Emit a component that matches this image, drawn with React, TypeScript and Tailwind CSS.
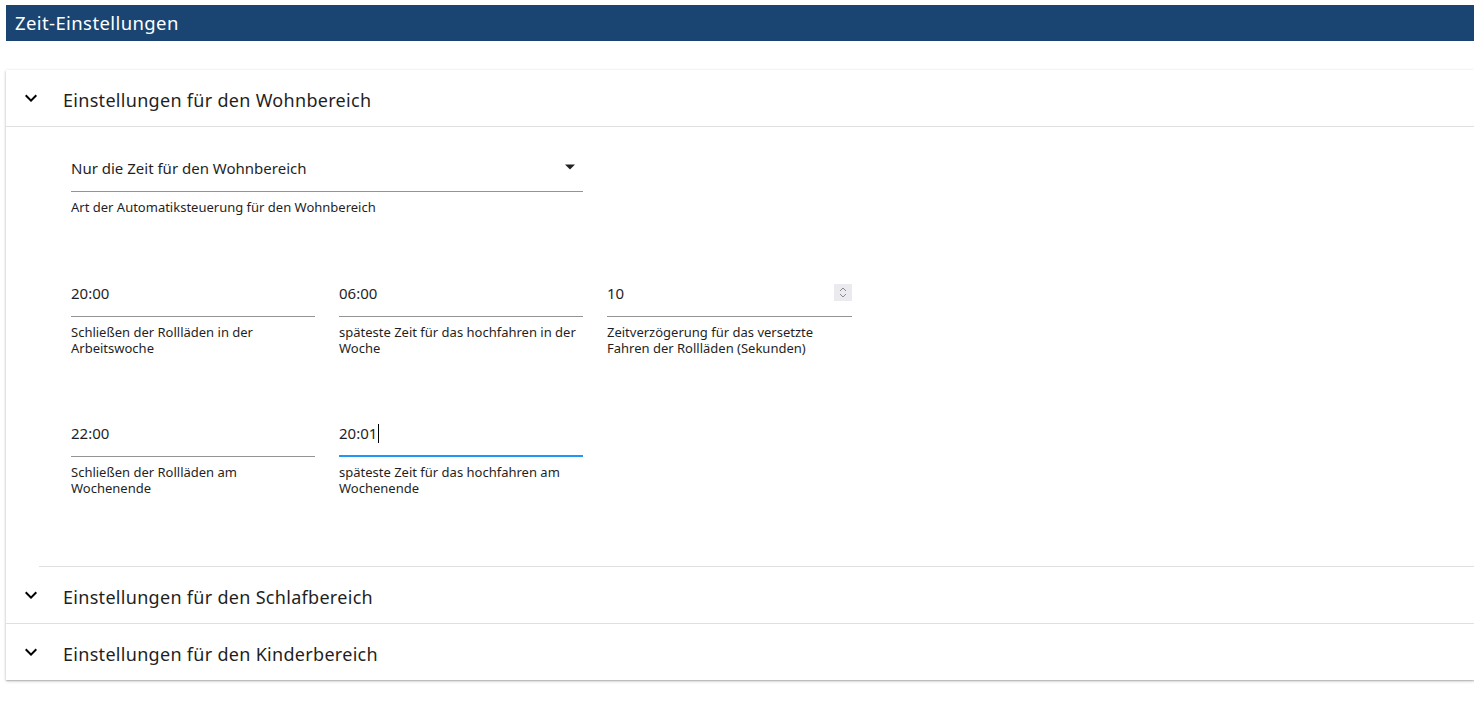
import React from "react";

const FONT = { fontFamily: '"Segoe UI", "Noto Sans", "Open Sans", sans-serif' };

function Chevron() {
  return (
    <svg width="24" height="24" viewBox="0 0 24 24" aria-hidden="true">
      <path d="M16.59 8.59 12 13.17 7.41 8.59 6 10l6 6 6-6z" fill="#000" />
    </svg>
  );
}

function AccordionHeader({ title, last }: { title: string; last?: boolean }) {
  return (
    <div className={`flex items-center pl-[13px] ${last ? "h-[56px]" : "h-[57px] border-b border-[#e0e0e0]"}`}>
      <Chevron />
      <span className="ml-[20px] mt-[5px] text-[18px] tracking-[0.3px] text-[#1f1f1f]">{title}</span>
    </div>
  );
}

interface FieldProps {
  value: string;
  helper: string[];
  focused?: boolean;
  spinner?: boolean;
  select?: boolean;
  className?: string;
}

function Field({ value, helper, focused, spinner, select, className = "" }: FieldProps) {
  return (
    <div className={className}>
      <div
        className={`flex items-start justify-between ${
          focused ? "border-b-2 border-[#2196f3]" : "border-b border-[#949494]"
        }`}
      >
        <div className={`flex h-[24px] items-center text-[15px] text-[#1f1f1f] ${focused ? "mb-[10px]" : "mb-[11px]"}`}>
          {value}
          {focused && <span className="ml-[1px] inline-block h-[19px] w-[1px] bg-black" />}
        </div>
        {select && (
          <svg width="10" height="6" viewBox="0 0 10 5" className="mr-[8px] mt-[8px]" aria-hidden="true">
            <path d="M0 0h10L5 5z" fill="#222" />
          </svg>
        )}
        {spinner && (
          <div className="mt-[3px] flex h-[17px] w-[18px] flex-col items-center justify-center bg-[#ebebef]">
            <svg width="8" height="5" viewBox="0 0 8 5" aria-hidden="true">
              <path d="M1 4 4 1l3 3" fill="none" stroke="#8a8a8a" strokeWidth="1" />
            </svg>
            <svg width="8" height="5" viewBox="0 0 8 5" className="mt-[1px]" aria-hidden="true">
              <path d="M1 1 4 4l3-3" fill="none" stroke="#8a8a8a" strokeWidth="1" />
            </svg>
          </div>
        )}
      </div>
      <div className="mt-[7px] text-[13px] leading-[16px] text-[#1f1f1f]">
        {helper.map((line) => (
          <div key={line}>{line}</div>
        ))}
      </div>
    </div>
  );
}

export default function App() {
  return (
    <div className="min-h-screen bg-white pl-[6px] pt-[5px]" style={FONT}>
      <div className="flex h-[36px] items-center bg-[#1a4572] pl-[9px] text-[18.5px] tracking-[0.4px] text-white">
        Zeit-Einstellungen
      </div>

      <div className="mt-[29px] bg-white shadow-[0_1px_3px_rgba(0,0,0,0.25),0_1px_1px_rgba(0,0,0,0.12)]">
        <AccordionHeader title="Einstellungen für den Wohnbereich" />

        <div className="pb-[70px] pl-[65px] pt-[29px]">
          <Field
            select
            className="w-[512px]"
            value="Nur die Zeit für den Wohnbereich"
            helper={["Art der Automatiksteuerung für den Wohnbereich"]}
          />

          <div className="mt-[66px] grid grid-cols-[244px_244px_245px] gap-x-[24px]">
            <Field value="20:00" helper={["Schließen der Rollläden in der", "Arbeitswoche"]} />
            <Field value="06:00" helper={["späteste Zeit für das hochfahren in der", "Woche"]} />
            <Field spinner value="10" helper={["Zeitverzögerung für das versetzte", "Fahren der Rollläden (Sekunden)"]} />
          </div>

          <div className="mt-[65px] grid grid-cols-[244px_244px] gap-x-[24px]">
            <Field value="22:00" helper={["Schließen der Rollläden am", "Wochenende"]} />
            <Field focused value="20:01" helper={["späteste Zeit für das hochfahren am", "Wochenende"]} />
          </div>
        </div>

        <div className="ml-[33px] border-t border-[#e0e0e0]" />
        <AccordionHeader title="Einstellungen für den Schlafbereich" />
        <AccordionHeader last title="Einstellungen für den Kinderbereich" />
      </div>
    </div>
  );
}
